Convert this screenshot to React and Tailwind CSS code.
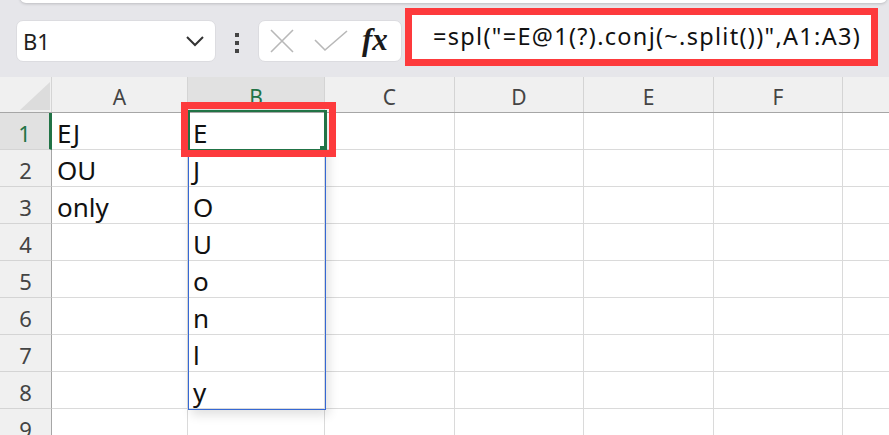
import React from "react";

const cols = [
  { key: "A", w: "w-[136px]" },
  { key: "B", w: "w-[137px]" },
  { key: "C", w: "w-[130px]" },
  { key: "D", w: "w-[129px]" },
  { key: "E", w: "w-[130px]" },
  { key: "F", w: "w-[129px]" },
  { key: "G", w: "w-[130px]", hidden: true },
];

const colA = ["EJ", "OU", "only"];
const colB = ["E", "J", "O", "U", "o", "n", "l", "y"];
const rows = [1, 2, 3, 4, 5, 6, 7, 8, 9];

function Toolbar() {
  return (
    <div className="flex items-start h-[74px] pl-[16px]">
      {/* name box */}
      <div className="mt-[17px] w-[200px] h-[42px] bg-white rounded-[7px] border border-[#dcdce0] flex items-center justify-between pl-[6px] pr-[10px]">
        <span className="text-[22px] text-[#1f1f1f]">B1</span>
        <svg width="20" height="12" viewBox="0 0 20 12">
          <path d="M2 2 L10 10 L18 2" fill="none" stroke="#333" strokeWidth="2" />
        </svg>
      </div>
      {/* dots */}
      <div className="mt-[30px] ml-[19px] flex flex-col gap-[4px]">
        <div className="w-[4px] h-[4px] bg-[#444]" />
        <div className="w-[4px] h-[4px] bg-[#444]" />
        <div className="w-[4px] h-[4px] bg-[#444]" />
      </div>
      {/* fx box */}
      <div className="mt-[17px] ml-[19px] w-[144px] h-[42px] bg-white rounded-[7px] border border-[#dcdce0] flex items-center pl-[11px]">
        <svg width="24" height="24" viewBox="0 0 24 24">
          <path d="M1 1 L23 23 M23 1 L1 23" stroke="#b8b8b8" strokeWidth="1.6" fill="none" />
        </svg>
        <svg width="34" height="22" viewBox="0 0 34 22" className="ml-[20px]">
          <path d="M1 10 L11 20 L33 1" stroke="#b8b8b8" strokeWidth="1.6" fill="none" />
        </svg>
        <span className="ml-[14px] text-[31px] leading-none italic font-semibold font-['Liberation_Serif',serif] text-[#1a1a1a] -mt-[3px]">
          fx
        </span>
      </div>
      {/* formula box */}
      <div className="mt-[5px] ml-[3px] w-[473px] h-[58px] border-[7px] border-[#fd3a3c] bg-white flex items-center pl-[21px]">
        <span className="text-[23.5px] text-[#111] tracking-[1.3px] whitespace-nowrap">
          =spl("=E@1(?).conj(~.split())",A1:A3)
        </span>
      </div>
    </div>
  );
}

function Grid() {
  return (
    <div className="flex flex-col">
      {/* column header */}
      <div className="flex h-[36px] border-b border-[#a6a6a6] bg-[#f0f0f0]">
        <div className="w-[52px] shrink-0 border-r border-[#d4d4d4] relative">
          <svg width="52" height="35" viewBox="0 0 52 35" className="absolute left-0 top-0">
            <polygon points="50,5 50,33 20,33" fill="#dcdcdc" />
          </svg>
        </div>
        {cols.map((c) => (
          <div
            key={c.key}
            className={`${c.w} shrink-0 border-r border-[#d4d4d4] flex items-center justify-center pt-[6px] text-[21px] ${
              c.key === "B" ? "bg-[#e1e1e1] text-[#217346]" : "text-[#444]"
            }`}
          >
            {c.hidden ? "" : c.key}
          </div>
        ))}
      </div>
      {rows.map((r) => (
        <div key={r} className="flex h-[37px] bg-white">
          <div
            className={`w-[52px] shrink-0 flex items-center justify-center pt-[4px] text-[22px] border-b border-[#d4d4d4] ${
              r === 1
                ? "bg-[#e1e1e1] text-[#217346] border-r-[3px] border-r-[#217346]"
                : "bg-[#f0f0f0] text-[#444] border-r border-r-[#a6a6a6]"
            }`}
          >
            {r}
          </div>
          {cols.map((c) => {
            let v = "";
            if (c.key === "A") v = colA[r - 1] || "";
            if (c.key === "B") v = colB[r - 1] || "";
            return (
              <div
                key={c.key}
                className={`${c.w} shrink-0 border-r border-b border-[#dadada] flex items-center pl-[5px] pt-[5px] text-[26px] text-[#111]`}
              >
                {v}
              </div>
            );
          })}
        </div>
      ))}
    </div>
  );
}

export default function App() {
  return (
    <div className="relative w-[889px] h-[435px] overflow-hidden bg-[#e6e6ea] font-['Noto_Sans',sans-serif]">
      <div className="h-[12px] -mt-[9px] ml-[20px] mr-[2px] bg-white rounded-[10px] shadow-[0_1px_3px_rgba(0,0,0,0.18)]" />
      <Toolbar />
      <Grid />

      {/* spill range */}
      <div className="absolute left-[188px] top-[111px] w-[138px] h-[299px] border border-[#3568d4] shadow-[3px_5px_10px_rgba(0,0,0,0.12)]" />
      {/* active cell */}
      <div className="absolute left-[188px] top-[110px] w-[139px] h-[41px] border-2 border-r-[3px] border-[#217346]" />
      <div className="absolute left-[320px] top-[146px] w-[7px] h-[6px] bg-[#217346]" />
      {/* red highlight */}
      <div className="absolute left-[181px] top-[102px] w-[155px] h-[55px] border-[7px] border-[#fd3a3c]" />
    </div>
  );
}
